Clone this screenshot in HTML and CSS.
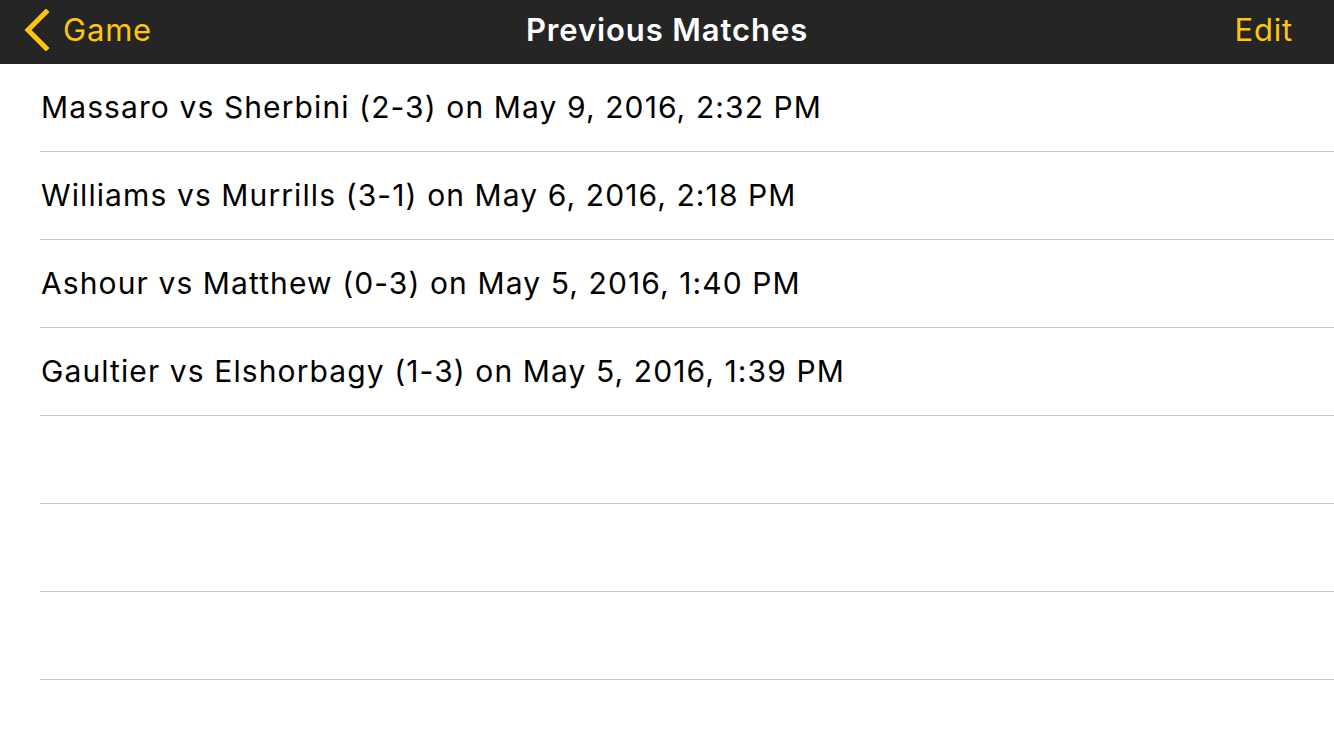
FILE: index.html
```html
<!DOCTYPE html>
<html>
<head>
<meta charset="utf-8">
<link rel="stylesheet" href="styles.css">
</head>
<body>
<header class="navbar">
  <div class="nav-left">
    <svg class="chevron" width="28" height="42" viewBox="0 0 28 42">
      <path d="M24 3 L6 21 L24 39" fill="none" stroke="#FFC40C" stroke-width="5" stroke-linecap="square" stroke-linejoin="miter"/>
    </svg>
    <span class="nav-link">Game</span>
  </div>
  <h1 class="nav-title">Previous Matches</h1>
  <div class="nav-right"><span class="nav-link">Edit</span></div>
</header>
<ul class="list">
  <li class="row"><span class="row-text">Massaro vs Sherbini (2-3) on May 9, 2016, 2:32 PM</span></li>
  <li class="row"><span class="row-text">Williams vs Murrills (3-1) on May 6, 2016, 2:18 PM</span></li>
  <li class="row"><span class="row-text">Ashour vs Matthew (0-3) on May 5, 2016, 1:40 PM</span></li>
  <li class="row"><span class="row-text">Gaultier vs Elshorbagy (1-3) on May 5, 2016, 1:39 PM</span></li>
  <li class="row"></li>
  <li class="row"></li>
  <li class="row"></li>
</ul>
</body>
</html>
```
FILE: styles.css
```css
* { box-sizing: border-box; }
html, body { margin: 0; padding: 0; background: #fff; }
body { font-family: "Inter", "Liberation Sans", sans-serif; width: 1334px; height: 750px; overflow: hidden; }
.navbar {
  height: 64px;
  background: #252525;
  display: grid;
  grid-template-columns: 1fr auto 1fr;
  align-items: center;
  padding-bottom: 6px;
}
.nav-left { display: flex; align-items: center; padding-left: 22px; }
.chevron { display: block; margin-right: 13px; margin-top: 2px; }
.nav-link { color: #FFC40C; font-size: 31px; letter-spacing: 0.8px; }
.nav-title { margin: 0; color: #fff; font-size: 31px; font-weight: 600; letter-spacing: 0.9px; }
.nav-right { display: flex; justify-content: flex-end; padding-right: 41px; }
.list { list-style: none; margin: 0; padding: 0 0 0 40px; }
.row {
  height: 88px;
  border-bottom: 1px solid #c8c7cc;
  display: flex;
  align-items: center;
}
.row-text { font-size: 30px; color: #000; padding-left: 1px; letter-spacing: 1.1px; margin-top: -2px; }
```
